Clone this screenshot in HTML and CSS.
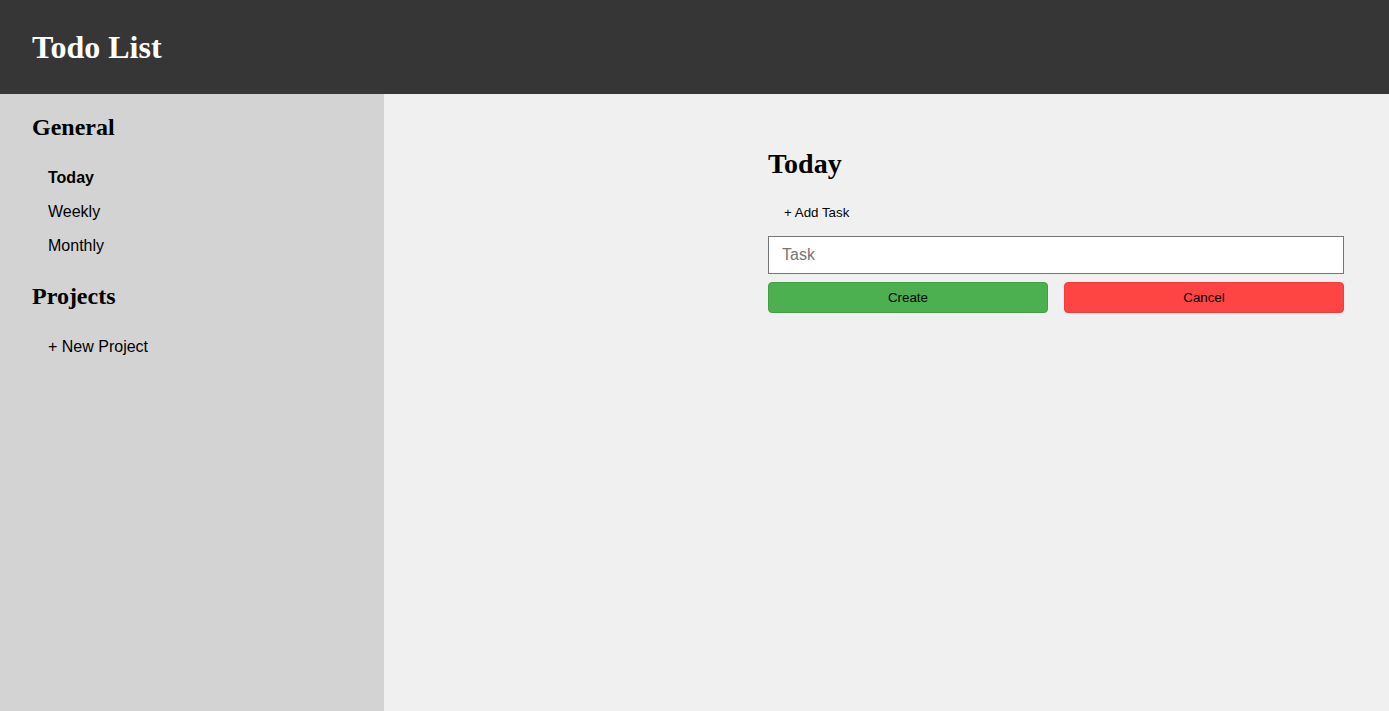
FILE: index.html
```html
<!DOCTYPE html>
<html lang="en">
<head>
<meta charset="utf-8">
<title>Todo List</title>
<link rel="stylesheet" href="styles.css">
</head>
<body>
<header class="header">
  <h1 class="title">Todo List</h1>
</header>
<div class="layout">
  <aside class="sidebar">
    <h2 class="side-heading">General</h2>
    <ul class="nav">
      <li class="nav-item active">Today</li>
      <li class="nav-item">Weekly</li>
      <li class="nav-item">Monthly</li>
    </ul>
    <h2 class="side-heading projects-heading">Projects</h2>
    <ul class="nav">
      <li class="nav-item">+ New Project</li>
    </ul>
  </aside>
  <main class="main">
    <section class="content">
      <h2 class="page-title">Today</h2>
      <button class="add-task" type="button">+ Add Task</button>
      <form class="task-form">
        <input class="task-input" type="text" placeholder="Task">
        <div class="form-buttons">
          <button class="btn btn-create" type="button">Create</button>
          <button class="btn btn-cancel" type="button">Cancel</button>
        </div>
      </form>
    </section>
  </main>
</div>
</body>
</html>
```

FILE: styles.css
```css
* { box-sizing: border-box; }
html, body { height: 100%; }
body {
  margin: 0;
  font-family: "Liberation Serif", "Times New Roman", serif;
  display: flex;
  flex-direction: column;
  background: #f0f0f0;
}
.header {
  height: 94px;
  background: #363636;
  display: flex;
  align-items: center;
  padding-left: 32px;
  flex-shrink: 0;
}
.title {
  margin: 0;
  color: #fff;
  font-size: 32px;
  font-weight: bold;
  line-height: 1;
}
.layout {
  flex: 1;
  display: flex;
}
.sidebar {
  width: 384px;
  flex-shrink: 0;
  background: #d3d3d3;
  padding-left: 32px;
}
.side-heading {
  font-size: 24px;
  margin: 20px 0 19px;
  line-height: 27.6px;
}
.projects-heading { margin-bottom: 20px; }
.nav {
  list-style: none;
  margin: 0;
  padding: 0;
}
.nav-item {
  font-family: "Liberation Sans", Arial, sans-serif;
  font-size: 16px;
  height: 34px;
  line-height: 34px;
  padding-left: 16px;
  color: #000;
}
.nav-item.active { font-weight: bold; }
.main {
  flex: 1;
  padding: 54px 45px 0 0;
  display: flex;
  justify-content: flex-end;
}
.content {
  width: 576px;
  display: flex;
  flex-direction: column;
  align-items: flex-start;
}
.page-title {
  margin: 0 0 17px;
  font-size: 28px;
  line-height: 32px;
}
.add-task {
  background: none;
  border: none;
  font-family: "Liberation Sans", Arial, sans-serif;
  font-size: 13.33px;
  color: #000;
  padding: 8px 16px;
  height: 31px;
  margin-bottom: 8px;
}
.task-form {
  width: 100%;
  display: flex;
  flex-direction: column;
  gap: 8px;
}
.task-input {
  width: 100%;
  height: 38px;
  border: 1px solid #767676;
  background: #fff;
  padding: 0 13px;
  font-family: "Liberation Sans", Arial, sans-serif;
  font-size: 16px;
  margin: 0;
}
.task-input::placeholder { color: #757575; }
.form-buttons {
  display: grid;
  grid-template-columns: 1fr 1fr;
  gap: 16px;
}
.btn {
  height: 31px;
  border-radius: 4px;
  font-family: "Liberation Sans", Arial, sans-serif;
  font-size: 13.33px;
  color: #000;
  padding: 0;
}
.btn-create {
  background: #4caf50;
  border: 1px solid #3fa043;
}
.btn-cancel {
  background: #ff4444;
  border: 1px solid #f53a3a;
}
```
